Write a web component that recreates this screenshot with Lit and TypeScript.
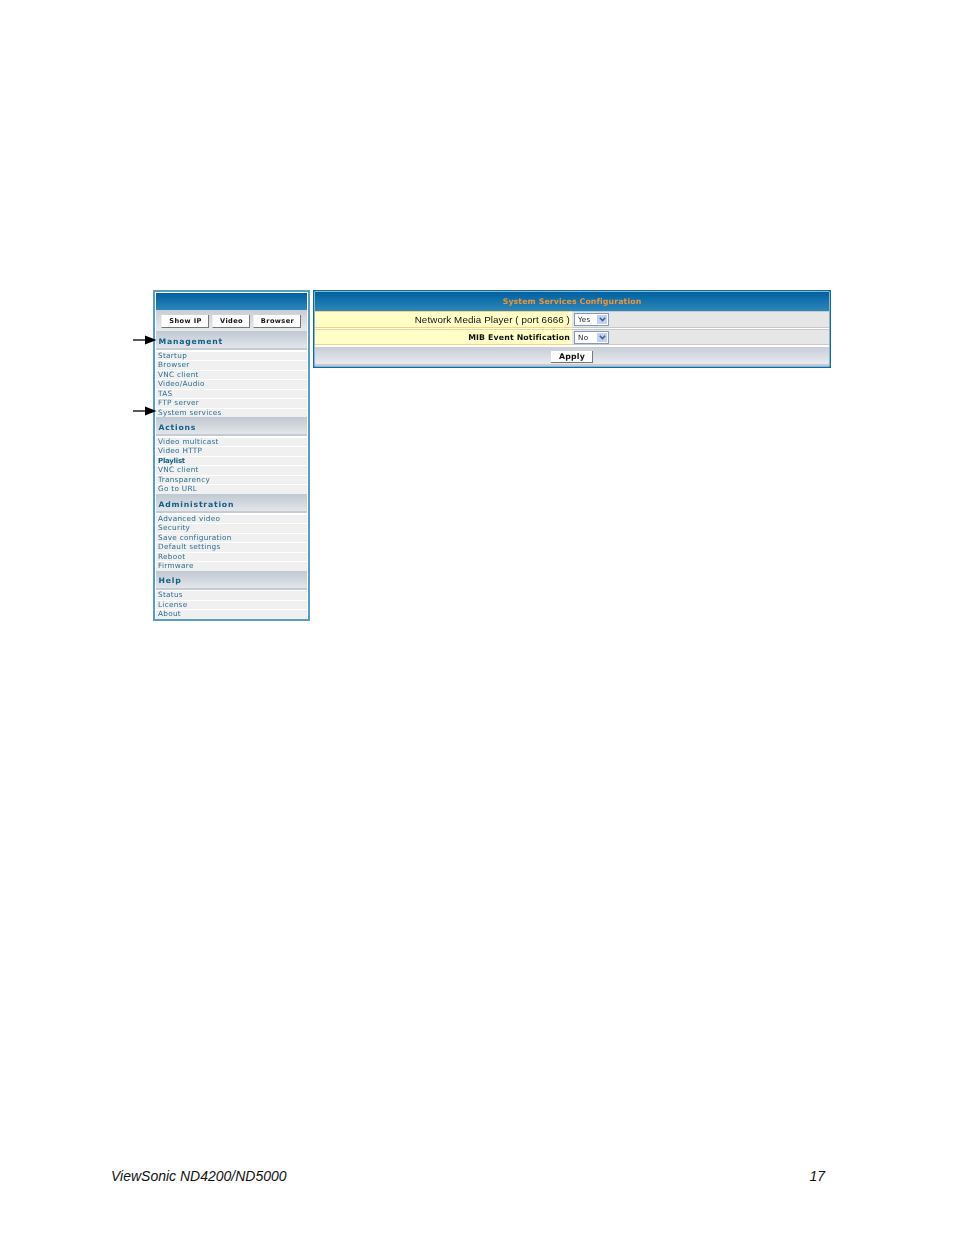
import { LitElement, html, css, svg } from "lit";
import { customElement } from "lit/decorators.js";

const MENU: { title: string; items: string[] }[] = [
  { title: "Management", items: ["Startup", "Browser", "VNC client", "Video/Audio", "TAS", "FTP server", "System services"] },
  { title: "Actions", items: ["Video multicast", "Video HTTP", "Playlist", "VNC client", "Transparency", "Go to URL"] },
  { title: "Administration", items: ["Advanced video", "Security", "Save configuration", "Default settings", "Reboot", "Firmware"] },
  { title: "Help", items: ["Status", "License", "About"] },
];

const arrow = svg`<svg width="24" height="12" viewBox="0 0 24 12"><path d="M0 6H13" stroke="#000" stroke-width="1.3"/><path d="M12 1.5L23.5 6L12 10.5Z" fill="#000"/></svg>`;

@customElement("app-root")
export class AppRoot extends LitElement {
  static styles = css`
    :host { display: block; }
    .page {
      width: 954px; height: 1235px; box-sizing: border-box; background: #fff;
      padding: 290px 123px 0 153px; display: flex; flex-direction: column;
      font-family: "DejaVu Sans", Verdana, sans-serif;
    }
    .top { display: flex; gap: 3.5px; align-items: flex-start; height: 860px; }
    .side-wrap { position: relative; width: 156.5px; flex: none; }
    .arrow { position: absolute; left: -20px; line-height: 0; z-index: 1; }
    .a1 { top: 44px; } .a2 { top: 115px; }
    .side { box-sizing: border-box; border: 2px solid #5a9dc4; padding: 1px; background: #fff; }
    .panel { box-sizing: border-box; border: 1px solid #0f6aa8; box-shadow: inset 0 0 0 .5px #0f6aa8; padding: 1px; background: #fff; }
    .side { height: 331px; display: flex; flex-direction: column; filter: blur(.3px); overflow: hidden; }
    .bluehead { background: linear-gradient(#00609e, #2d87ba); }
    .side .bluehead { height: 17px; flex: none; }
    .toolbar {
      height: 21px; flex: none; box-sizing: border-box; padding: 5px 0 0 5px; display: flex; gap: 3px;
      background: linear-gradient(#c6ced7, #e9eaee);
    }
    .btn {
      box-sizing: border-box; height: 12.5px; background: #fff; color: #111; font-size: 6.6px; font-weight: 700;
      display: flex; align-items: center; justify-content: center; letter-spacing: .4px; padding-left: 1px;
      border-right: 1.5px solid #777; border-bottom: 1.5px solid #777; border-left: 1px solid #eee;
    }
    .b1 { width: 48px; } .b2 { width: 38px; } .b3 { width: 48px; }
    .band {
      height: 19px; flex: none; box-sizing: border-box; padding: 1px 0 0 2.5px; display: flex; align-items: center;
      background: linear-gradient(#c0c8d2, #e3e5e9 88%, #c3cbd4 88%);
      color: #0f5f88; font-size: 7.7px; font-weight: 700; letter-spacing: .8px;
    }
    .items { padding: .5px 0 .3px; display: flex; flex-direction: column; flex: none; }
    .item {
      height: 9.5px; line-height: 8.5px; box-sizing: border-box; background: #f0f0f0; border-top: 1px solid #fff;
      padding-left: 2px; font-size: 7.3px; letter-spacing: .28px; color: #2c6f8f; white-space: nowrap;
    }
    .item.bold { font-weight: 700; color: #14607f; font-size: 7px; letter-spacing: -.25px; }
    .main { flex: 1; }
    .panel { height: 78px; width: 518px; filter: blur(.3px); display: flex; flex-direction: column; }
    .title {
      height: 19px; flex: none; display: flex; align-items: center; justify-content: center;
      color: #ef9636; font-size: 7.8px; font-weight: 700; letter-spacing: .12px;
    }
    .row { display: flex; height: 17.5px; flex: none; border-bottom: 1px solid #fff; box-sizing: border-box; }
    .label {
      width: 256px; flex: none; box-sizing: border-box; background: #ffffc6;
      border-top: 1.5px solid #ffd083; border-bottom: 1px solid #ffd083;
      display: flex; align-items: center; justify-content: flex-end; padding: 1px 1px 0 0;
      color: #111; font: 9.8px "Liberation Sans", Arial, sans-serif; white-space: nowrap; letter-spacing: .1px;
    }
    .label.b { font: 700 7.8px "DejaVu Sans", Verdana, sans-serif; letter-spacing: .15px; }
    .val { flex: 1; background: #e6e6e6; border-top: 1px solid #c8c8c8; border-bottom: 1px solid #c8c8c8; display: flex; align-items: center; padding: 1px 0 0 2px; border-left: 1px solid #fff; }
    .sel {
      box-sizing: border-box; width: 35px; height: 13px; background: #fff; border: 1px solid #7f9cc0;
      display: flex; align-items: center; justify-content: space-between; padding: 0 1px 0 3px;
      color: #222; font-size: 7.2px; letter-spacing: .3px;
    }
    .sel .dd { width: 10px; height: 9px; background: #c3d2f2; display: flex; align-items: center; justify-content: center; line-height: 0; }
    .foot {
      flex: 1; display: flex; align-items: flex-start; justify-content: center;
      padding-top: 3.5px; background: linear-gradient(#c6ced7, #e8e9ed 88%, #c3cbd4 88%);
      border-top: 1px solid #fff;
    }
    .apply {
      box-sizing: border-box; width: 42px; height: 12.5px; background: #fff; color: #111;
      font-size: 7.8px; font-weight: 700; letter-spacing: .2px; padding-left: 1px;
      display: flex; align-items: center; justify-content: center;
      border-right: 1.5px solid #777; border-bottom: 1.5px solid #777;
    }
    .footer {
      display: flex; justify-content: space-between; align-items: center;
      margin-left: -42px; padding-right: 6px; padding-top: 18px;
      font: italic 14px "Liberation Sans", Arial, sans-serif; color: #111;
    }
  `;

  private chev() {
    return svg`<svg width="7" height="5" viewBox="0 0 7 5"><path d="M.8 .8L3.5 3.6L6.2 .8" fill="none" stroke="#3b5f9a" stroke-width="1.5"/></svg>`;
  }

  render() {
    return html`<div class="page">
      <div class="top">
        <div class="side-wrap">
          <div class="arrow a1">${arrow}</div>
          <div class="arrow a2">${arrow}</div>
          <nav class="side">
            <div class="bluehead"></div>
            <div class="toolbar">
              <div class="btn b1">Show IP</div>
              <div class="btn b2">Video</div>
              <div class="btn b3">Browser</div>
            </div>
            ${MENU.map(
              (g) => html`<div class="band">${g.title}</div>
                <div class="items">
                  ${g.items.map((i) => html`<div class="item ${i === "Playlist" ? "bold" : ""}">${i}</div>`)}
                </div>`
            )}
          </nav>
        </div>
        <div class="main">
          <div class="panel">
            <div class="bluehead title">System Services Configuration</div>
            <div class="row">
              <div class="label">Network Media Player ( port 6666 )</div>
              <div class="val"><div class="sel">Yes<span class="dd">${this.chev()}</span></div></div>
            </div>
            <div class="row">
              <div class="label b">MIB Event Notification</div>
              <div class="val"><div class="sel">No<span class="dd">${this.chev()}</span></div></div>
            </div>
            <div class="foot"><div class="apply">Apply</div></div>
          </div>
        </div>
      </div>
      <div class="footer"><span>ViewSonic ND4200/ND5000</span><span>17</span></div>
    </div>`;
  }
}
